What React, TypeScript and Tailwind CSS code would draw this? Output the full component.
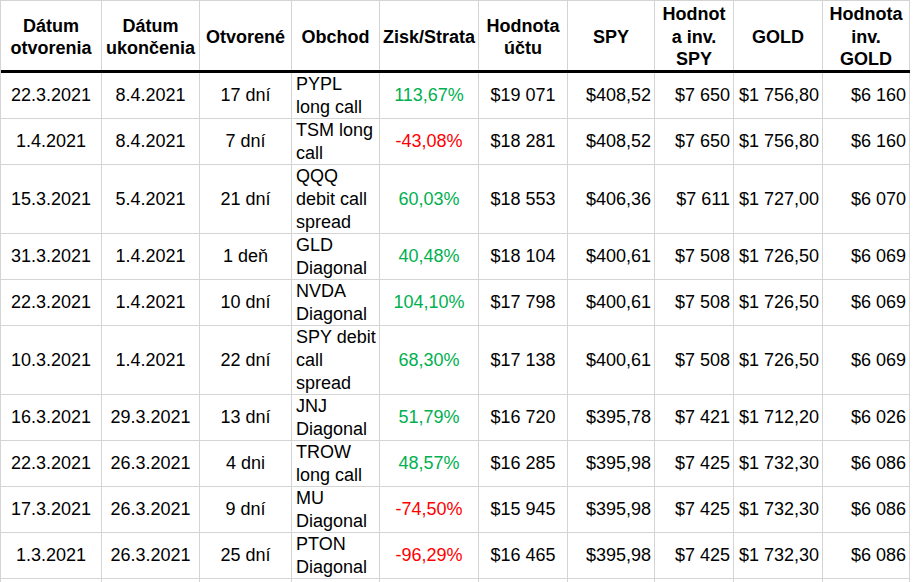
import React from 'react';

type Align = 'center' | 'left' | 'right';

interface Column {
  width: string;
  align: Align;
  header: string[];
}

const columns: Column[] = [
  { width: 'w-[101px]', align: 'center', header: ['Dátum', 'otvorenia'] },
  { width: 'w-[98px]', align: 'center', header: ['Dátum', 'ukončenia'] },
  { width: 'w-[92px]', align: 'center', header: ['Otvorené'] },
  { width: 'w-[88px]', align: 'left', header: ['Obchod'] },
  { width: 'w-[99px]', align: 'center', header: ['Zisk/Strata'] },
  { width: 'w-[89px]', align: 'center', header: ['Hodnota', 'účtu'] },
  { width: 'w-[87px]', align: 'right', header: ['SPY'] },
  { width: 'w-[79px]', align: 'right', header: ['Hodnot', 'a inv.', 'SPY'] },
  { width: 'w-[89px]', align: 'right', header: ['GOLD'] },
  { width: 'w-[87px]', align: 'right', header: ['Hodnota', 'inv.', 'GOLD'] },
];

interface Trade {
  opened: string;
  closed: string;
  days: string;
  trade: string[];
  pl: string;
  account: string;
  spy: string;
  spyValue: string;
  gold: string;
  goldValue: string;
}

const trades: Trade[] = [
  { opened: '22.3.2021', closed: '8.4.2021', days: '17 dní', trade: ['PYPL', 'long call'], pl: '113,67%', account: '$19 071', spy: '$408,52', spyValue: '$7 650', gold: '$1 756,80', goldValue: '$6 160' },
  { opened: '1.4.2021', closed: '8.4.2021', days: '7 dní', trade: ['TSM long', 'call'], pl: '-43,08%', account: '$18 281', spy: '$408,52', spyValue: '$7 650', gold: '$1 756,80', goldValue: '$6 160' },
  { opened: '15.3.2021', closed: '5.4.2021', days: '21 dní', trade: ['QQQ', 'debit call', 'spread'], pl: '60,03%', account: '$18 553', spy: '$406,36', spyValue: '$7 611', gold: '$1 727,00', goldValue: '$6 070' },
  { opened: '31.3.2021', closed: '1.4.2021', days: '1 deň', trade: ['GLD', 'Diagonal'], pl: '40,48%', account: '$18 104', spy: '$400,61', spyValue: '$7 508', gold: '$1 726,50', goldValue: '$6 069' },
  { opened: '22.3.2021', closed: '1.4.2021', days: '10 dní', trade: ['NVDA', 'Diagonal'], pl: '104,10%', account: '$17 798', spy: '$400,61', spyValue: '$7 508', gold: '$1 726,50', goldValue: '$6 069' },
  { opened: '10.3.2021', closed: '1.4.2021', days: '22 dní', trade: ['SPY debit', 'call', 'spread'], pl: '68,30%', account: '$17 138', spy: '$400,61', spyValue: '$7 508', gold: '$1 726,50', goldValue: '$6 069' },
  { opened: '16.3.2021', closed: '29.3.2021', days: '13 dní', trade: ['JNJ', 'Diagonal'], pl: '51,79%', account: '$16 720', spy: '$395,78', spyValue: '$7 421', gold: '$1 712,20', goldValue: '$6 026' },
  { opened: '22.3.2021', closed: '26.3.2021', days: '4 dni', trade: ['TROW', 'long call'], pl: '48,57%', account: '$16 285', spy: '$395,98', spyValue: '$7 425', gold: '$1 732,30', goldValue: '$6 086' },
  { opened: '17.3.2021', closed: '26.3.2021', days: '9 dní', trade: ['MU', 'Diagonal'], pl: '-74,50%', account: '$15 945', spy: '$395,98', spyValue: '$7 425', gold: '$1 732,30', goldValue: '$6 086' },
  { opened: '1.3.2021', closed: '26.3.2021', days: '25 dní', trade: ['PTON', 'Diagonal'], pl: '-96,29%', account: '$16 465', spy: '$395,98', spyValue: '$7 425', gold: '$1 732,30', goldValue: '$6 086' },
];

const alignClass: Record<Align, string> = {
  center: 'justify-center text-center',
  left: 'justify-start text-left pl-[4px]',
  right: 'justify-end text-right pr-[3px]',
};

const Lines: React.FC<{ lines: string[] }> = ({ lines }) => (
  <div>
    {lines.map((line, i) => (
      <div key={i} className="whitespace-nowrap">
        {line}
      </div>
    ))}
  </div>
);

export default function App() {
  return (
    <div
      className="h-[582px] w-[914px] overflow-hidden bg-white text-[18px] text-black"
      style={{ fontFamily: '"Liberation Sans", Arial, sans-serif' }}
    >
      <div className="w-[910px] border-l border-t border-[#d4d4d4]">
        {/* header */}
        <div className="flex h-[72px] border-b-[3px] border-black font-bold leading-[22.5px]">
          {columns.map((col, i) => (
            <div
              key={i}
              className={`flex ${col.width} shrink-0 items-center justify-center border-r border-[#d4d4d4] pt-[3px] text-center`}
            >
              <Lines lines={col.header} />
            </div>
          ))}
        </div>

        {trades.map((t, r) => {
          const tall = t.trade.length > 2;
          const cells: React.ReactNode[] = [
            t.opened,
            t.closed,
            t.days,
            <Lines lines={t.trade} />,
            <span className={t.pl.startsWith('-') ? 'text-[#ff0000]' : 'text-[#00b050]'}>{t.pl}</span>,
            t.account,
            t.spy,
            t.spyValue,
            t.gold,
            t.goldValue,
          ];
          return (
            <div
              key={r}
              className={`flex ${tall ? 'h-[69px]' : 'h-[46px]'} border-b border-[#d4d4d4] leading-[23px]`}
            >
              {cells.map((cell, i) => (
                <div
                  key={i}
                  className={`flex ${columns[i].width} shrink-0 items-center overflow-visible border-r border-[#d4d4d4] whitespace-nowrap ${alignClass[columns[i].align]}`}
                >
                  {cell}
                </div>
              ))}
            </div>
          );
        })}

        <div className="flex h-[30px]">
          {columns.map((col, i) => (
            <div key={i} className={`${col.width} shrink-0 border-r border-[#d4d4d4]`} />
          ))}
        </div>
      </div>
    </div>
  );
}
